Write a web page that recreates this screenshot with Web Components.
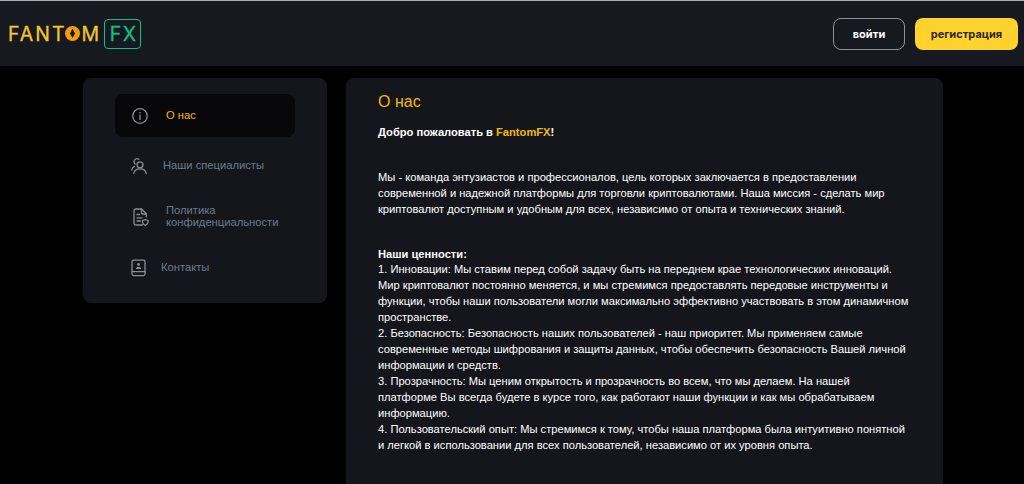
<!DOCTYPE html>
<html lang="ru">
<head>
<meta charset="utf-8">
<title>FantomFX</title>
<style>
    html, body { margin: 0; height: 484px; overflow: hidden; background: #000; }
    body { font-family: "Liberation Sans", Arial, sans-serif; }
    .page { display: flex; gap: 19px; padding: 12px 0 0 83px; align-items: flex-start; }
</style>
</head>
<body>
<site-header></site-header>
<div class="page">
    <side-nav>
        <nav-item icon="info" active style="--pad-left:16px;--gap:17px">О нас</nav-item>
        <nav-item icon="people" style="--pad-left:15px;--gap:15px;--mt:7px">Наши специалисты</nav-item>
        <nav-item icon="policy" style="--pad-left:18px;--gap:15px;--mt:8px">Политика<br>конфиденциальности</nav-item>
        <nav-item icon="book" style="--pad-left:15px;--gap:13px;--mt:8px">Контакты</nav-item>
    </side-nav>
    <about-panel>
        <h2 slot="title">О нас</h2>
    </about-panel>
</div>

<script>
/**
 * Header: logo and the two auth buttons
 */
class SiteHeader extends HTMLElement {
    connectedCallback() {
        this.attachShadow({ mode: 'open' });
        this.shadowRoot.innerHTML = `
            <style>
                :host {
                    display: flex;
                    height: 65px;
                    border-top: 1px solid #a9acb0;
                    background: #16191f;
                    align-items: center;
                    justify-content: space-between;
                    padding: 0 6px 0 8px;
                }
                .logo { display: flex; align-items: center; }
                .fantom { display: flex; align-items: center; color: #f3c62d; font: 400 19.500px "Inter", sans-serif; letter-spacing: 2px; -webkit-text-stroke: .3px #f3c62d; }
                .fantom svg { width: 15px; height: 15px; margin: 0 1px 0 -1px; flex: none; }
                .fx {
                    display: flex; align-items: center; justify-content: center;
                    width: 37px; height: 30px; margin-left: 3px; padding-left: 2px;
                    border: 1.500px solid #14bd85; border-radius: 4px;
                    color: #14bd85; font: 400 19.500px "Inter", sans-serif; letter-spacing: 1.500px; -webkit-text-stroke: .3px #14bd85;
                    box-sizing: border-box;
                }
                .auth { display: flex; gap: 10px; }
                button {
                    height: 32px; border-radius: 8px; box-sizing: border-box;
                    font: 700 11px "Inter", sans-serif; cursor: pointer; padding: 0;
                }
                .login { width: 72px; background: transparent; border: 1.500px solid #8f9194; color: #fff; }
                .signup { width: 103px; background: #ffd22e; border: 0; color: #2a2a1c; }
            </style>
            <div class="logo">
                <span class="fantom">FANT<svg viewBox="0 0 15 15"><circle cx="7.500" cy="7.500" r="7.500" fill="#f39c0a"/><path d="M7.500 2.500 5 7.600 7.500 12 10 7.600z" fill="#16191f"/></svg>M</span>
                <span class="fx">FX</span>
            </div>
            <div class="auth">
                <button class="login">войти</button>
                <button class="signup">регистрация</button>
            </div>
        `;
    }
}

/**
 * Left card that holds the nav items
 */
class SideNav extends HTMLElement {
    connectedCallback() {
        this.attachShadow({ mode: 'open' });
        this.shadowRoot.innerHTML = `
            <style>
                :host {
                    display: flex;
                    flex-direction: column;
                    flex: none;
                    width: 244px;
                    height: 225px;
                    box-sizing: border-box;
                    padding: 16px 32px 0 32px;
                    background: #14161c;
                    border-radius: 8px;
                }
            </style>
            <slot></slot>
        `;
    }
}

const ICONS = {
    info: `<circle cx="9" cy="9" r="7.300"/><path d="M9 8.200v4.300M9 5.400v.6"/>`,
    people: `<circle cx="10" cy="7.800" r="3"/><path d="M3.800 16.500c.4-2.900 3-4.600 6.200-4.600s5.800 1.700 6.200 4.600"/><path d="M8.800 2.300A3 3 0 0 0 4 4.700c0 .9.400 1.800 1.100 2.400M4.400 9.400C2.900 10.200 2 11.400 1.700 13"/>`,
    policy: `<path d="M9.500 17H3c-1.200 0-2-.8-2-2V3c0-1.200.8-2 2-2h5.500l4.800 4.800v3"/><path d="M8.500 1.200V5c0 .6.400 1 1 1h3.800M4 6.500h2.500M4 9.800h5M4 13h3.500"/><path d="M9.500 12.500l2.800-.9 2.800.9v1.800c0 1.300-1.200 2.300-2.800 3-1.600-.7-2.800-1.700-2.800-3z"/>`,
    book: `<rect x="2" y="1.200" width="13" height="15.400" rx="1.500"/><path d="M2 12.600h13"/><circle cx="8.500" cy="5.400" r="1.400" fill="#8b8d94" stroke="none"/><path d="M5.800 10c.2-1.500 1.200-2.200 2.700-2.200s2.500.7 2.700 2.200z" fill="#8b8d94" stroke="none"/>`
};

class NavItem extends HTMLElement {
    connectedCallback() {
        const icon = ICONS[this.getAttribute('icon')] ?? '';
        this.attachShadow({ mode: 'open' });
        this.shadowRoot.innerHTML = `
            <style>
                :host {
                    display: flex;
                    flex: none;
                    align-items: center;
                    gap: var(--gap, 16px);
                    height: 43px;
                    margin-top: var(--mt, 0);
                    padding-left: var(--pad-left, 16px);
                    border-radius: 8px;
                    color: #707b89;
                    font: 11.200px/11.200px "Liberation Sans", sans-serif;
                }
                :host([active]) { background: #08080a; color: #f0b90b; }
                svg { width: 18px; height: 18px; flex: none; fill: none; stroke: #8b8d94; stroke-width: 1.300; stroke-linecap: round; stroke-linejoin: round; }
            </style>
            <svg viewBox="0 0 18 18">${icon}</svg>
            <span><slot></slot></span>
        `;
    }
}

/**
 * Right card with the page text
 */
class AboutPanel extends HTMLElement {
    connectedCallback() {
        this.attachShadow({ mode: 'open' });
        this.shadowRoot.innerHTML = `
            <style>
                :host {
                    display: block;
                    flex: none;
                    width: 597px;
                    height: 420px;
                    box-sizing: border-box;
                    padding: 14px 32px 0;
                    background: #14161c;
                    border-radius: 8px 8px 0 0;
                    color: #fff;
                    font: 11.150px/16px "Liberation Sans", sans-serif;
                    white-space: nowrap;
                }
                ::slotted(h2) { margin: 0; font: 400 16px/20px "Liberation Sans", sans-serif; color: #f0b90b; }
                p { margin: 0; }
                .hello { margin-top: 12px; font-weight: 700; }
                .hello span { color: #f0b90b; }
                .mission { margin-top: 29px; }
                .values { margin-top: 29px; }
                .list { display: block; margin-top: -1px; }
                b { font-weight: 700; }
            </style>
            <slot name="title"></slot>
            <p class="hello">Добро пожаловать в <span>FantomFX</span>!</p>
            <p class="mission">Мы - команда энтузиастов и профессионалов, цель которых заключается в предоставлении<br>современной и надежной платформы для торговли криптовалютами. Наша миссия - сделать мир<br>криптовалют доступным и удобным для всех, независимо от опыта и технических знаний.</p>
            <p class="values"><b>Наши ценности:</b>
            <span class="list">
            1. Инновации: Мы ставим перед собой задачу быть на переднем крае технологических инноваций.<br>
            Мир криптовалют постоянно меняется, и мы стремимся предоставлять передовые инструменты и<br>
            функции, чтобы наши пользователи могли максимально эффективно участвовать в этом динамичном<br>
            пространстве.<br>
            2. Безопасность: Безопасность наших пользователей - наш приоритет. Мы применяем самые<br>
            современные методы шифрования и защиты данных, чтобы обеспечить безопасность Вашей личной<br>
            информации и средств.<br>
            3. Прозрачность: Мы ценим открытость и прозрачность во всем, что мы делаем. На нашей<br>
            платформе Вы всегда будете в курсе того, как работают наши функции и как мы обрабатываем<br>
            информацию.<br>
            4. Пользовательский опыт: Мы стремимся к тому, чтобы наша платформа была интуитивно понятной<br>
            и легкой в использовании для всех пользователей, независимо от их уровня опыта.</span></p>
        `;
    }
}

customElements.define('site-header', SiteHeader);
customElements.define('side-nav', SideNav);
customElements.define('nav-item', NavItem);
customElements.define('about-panel', AboutPanel);
</script>
</body>
</html>
